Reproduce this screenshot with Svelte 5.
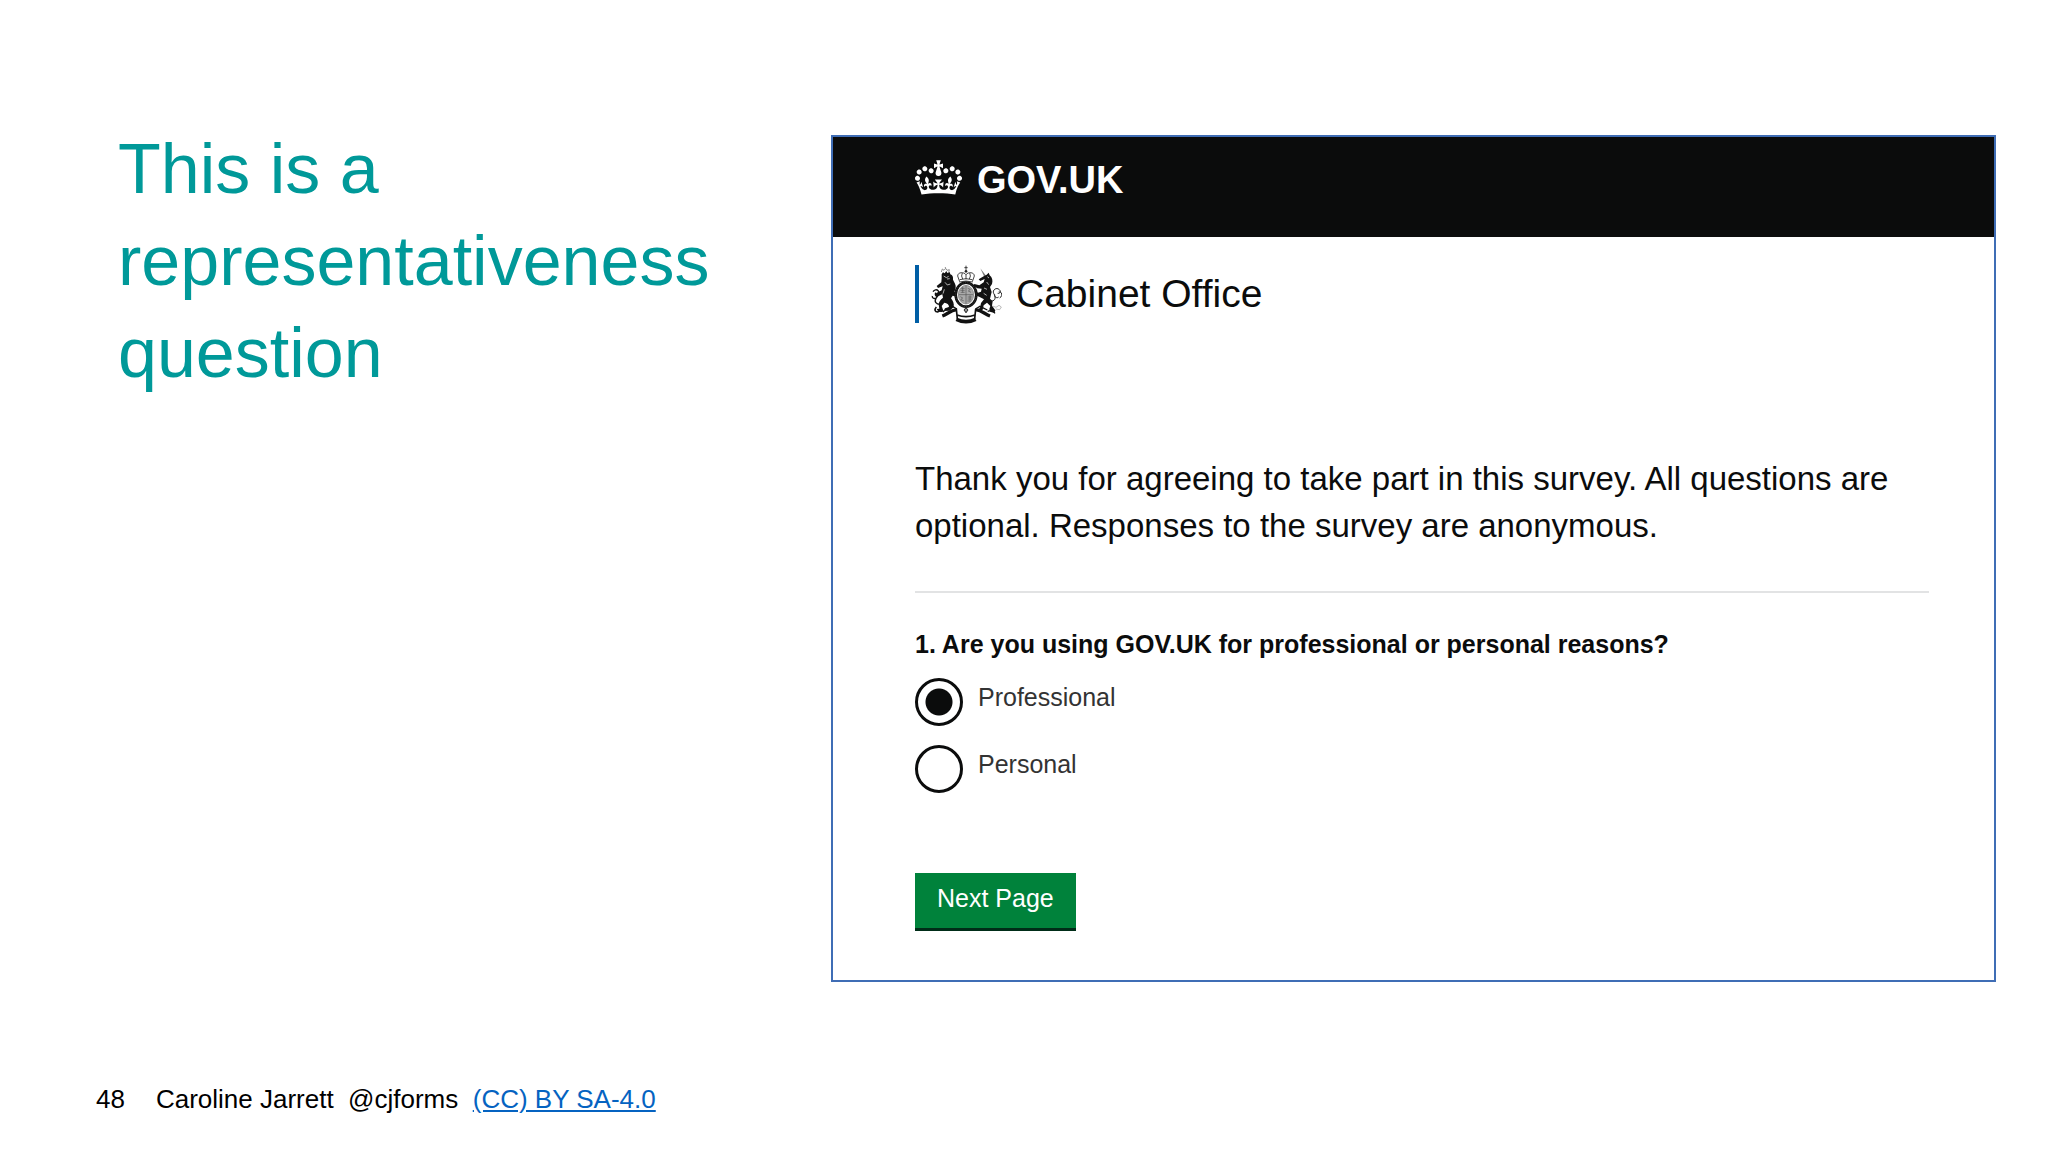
<script lang="ts">
  let reason = 'professional';

  const options = [
    { value: 'professional', label: 'Professional' },
    { value: 'personal', label: 'Personal' },
  ];
</script>

<div class="slide">
  <main>
    <h1>This is a representativeness question</h1>

    <section class="survey">
      <header>
        <svg class="crown" viewBox="0 0 132 97" aria-hidden="true">
          <path fill="currentColor" d="M25 30.2c3.5 1.5 7.7-.2 9.1-3.7 1.5-3.6-.2-7.8-3.9-9.2-3.6-1.4-7.6.3-9.1 3.9-1.4 3.5.3 7.5 3.9 9zM9 39.5c3.6 1.5 7.8-.2 9.2-3.7 1.5-3.6-.2-7.8-3.9-9.1-3.6-1.5-7.6.2-9.1 3.8-1.4 3.5.3 7.5 3.8 9zM4.4 57.2c3.5 1.5 7.7-.2 9.1-3.8 1.5-3.6-.2-7.7-3.9-9.1-3.5-1.5-7.6.3-9.1 3.8-1.4 3.5.3 7.6 3.9 9.1zm38.3-21.4c3.5 1.5 7.7-.2 9.1-3.8 1.5-3.6-.2-7.7-3.9-9.1-3.6-1.5-7.6.3-9.1 3.8-1.3 3.6.4 7.7 3.9 9.1zm64.4-5.6c-3.6 1.5-7.8-.2-9.1-3.7-1.5-3.6.2-7.8 3.8-9.2 3.6-1.4 7.7.3 9.2 3.9 1.3 3.5-.4 7.5-3.9 9zm15.9 9.3c-3.6 1.5-7.7-.2-9.1-3.7-1.5-3.6.2-7.8 3.7-9.1 3.6-1.5 7.7.2 9.2 3.8 1.5 3.5-.3 7.5-3.8 9zm4.7 17.7c-3.6 1.5-7.8-.2-9.2-3.8-1.5-3.6.2-7.7 3.9-9.1 3.6-1.5 7.7.3 9.2 3.8 1.3 3.5-.4 7.6-3.9 9.1zM89.3 35.8c-3.6 1.5-7.8-.2-9.2-3.8-1.4-3.6.2-7.7 3.9-9.1 3.6-1.5 7.7.3 9.2 3.8 1.4 3.6-.3 7.7-3.9 9.1zM69.7 17.7l8.9 4.7V9.3l-8.9 2.8c-.2-.3-.5-.6-.9-.9L72.4 0H59.6l3.5 11.2c-.3.3-.6.5-.9.9l-8.8-2.8v13.1l8.8-4.7c.3.3.6.7.9.9l-5 15.4v.1c-.2.8-.4 1.6-.4 2.4 0 4.1 3.1 7.5 7 8.1h.2c.3 0 .7.1 1 .1.4 0 .7 0 1-.1h.2c4-.6 7.1-4.1 7.1-8.1 0-.8-.1-1.7-.4-2.4V34l-5.1-15.4c.4-.2.7-.6 1-.9zM66 92.8c16.9 0 32.8 1.1 47.1 3.2 4-16.9 8.9-26.7 14-33.5l-9.6-3.4c1 4.9 1.1 7.2 0 10.2-1.5-1.4-3-4.3-4.2-8.7L108.6 76c2.8-2 5-3.2 7.5-3.3-4.4 9.4-10 11.9-13.6 11.2-4.3-.8-6.3-4.6-5.6-7.9 1-4.7 5.7-5.9 8-.5 4.3-8.7-3-11.4-7.6-8.8 7.1-7.2 7.9-13.5 2.1-21.1-8 6.1-8.1 12.3-4.5 20.8-4.7-5.4-12.1-2.5-9.5 6.2 3.4-5.2 7.9-2 7.2 3.1-.6 4.3-6.4 7.8-13.5 7.2-10.3-.9-10.9-8-11.2-13.8 2.5-.5 7.1 1.8 11 7.3L80.2 60c-4.1 4.4-8 5.3-12.3 5.4 1.4-4.4 8-11.6 8-11.6H55.5s6.4 7.2 7.9 11.6c-4.2-.1-8-1-12.3-5.4l1.4 16.4c3.9-5.5 8.5-7.7 10.9-7.3-.3 5.8-.9 12.8-11.1 13.8-7.2.6-12.9-2.9-13.5-7.2-.7-5 3.8-8.3 7.1-3.1 2.7-8.7-4.6-11.6-9.4-6.2 3.7-8.5 3.6-14.7-4.6-20.8-5.8 7.6-5 13.9 2.2 21.1-4.7-2.6-11.9.1-7.7 8.8 2.3-5.5 7.1-4.2 8.1.5.7 3.3-1.3 7.1-5.7 7.9-3.5.7-9-1.8-13.5-11.2 2.5.1 4.7 1.3 7.5 3.3l-4.7-15.4c-1.2 4.4-2.7 7.2-4.3 8.7-1.1-3-.9-5.3 0-10.2l-9.5 3.4c5 6.9 9.9 16.7 14 33.5 14.8-2.1 30.8-3.2 47.7-3.2z" />
        </svg>
        <span class="wordmark">GOV.UK</span>
      </header>

      <div class="body">
        <div class="department">
          <svg class="arms" viewBox="80 28 213 177" aria-hidden="true">
            <!-- crown -->
            <g fill="none" stroke="#222" stroke-width="2.5">
              <path d="M185 30v14M180 36h10M166 78l-6-17c0-12 19-13 25-4 6-9 25-8 25 4l-6 17M166 72q19-6 38 0M165 79q20-6 40 0M185 56v15M174 52q-5 9 1 18M196 52q5 9-1 18" />
            </g>
            <circle cx="185" cy="47" r="4" fill="#222" />
            <!-- lion -->
            <path d="M112 56l4-6 5 3 5-7 3 6 7-3 2 7c7 2 9 9 8 16l6 12c4 8 2 16-2 24l10 8-3 7-12-3-5 8c6 8 10 16 8 26l-12 11-18 1 4-8 12-4c0-8-6-12-14-13l-8 10 4 11c0 8-7 9-15 4l-4-6 8-1-2-13c1-9 7-15 13-20l-2-10-16 7-5-5 3-6 16-8 3-12-14 5-4-6 14-11 1-12z" />
            <path d="M109 146c-14 1-20-8-14-18 6-9 12-14 7-22-5-6-12-4-16 2M95 128c-8 2-12-3-11-7M98 123c-5-2-7-8-3-12" fill="none" stroke="#111" stroke-width="4" />
            <path d="M111 49l3-9 5 4 5-6 4 6 7-2-2 9M123 38v-4" fill="none" stroke="#777" stroke-width="2.5" />
            <path d="M118 61l8 5 7-4M128 70l8-1M122 80l7 8 9-3M120 101l-4 13" fill="none" stroke="#fff" stroke-width="2" />
            <!-- unicorn -->
            <path d="M228 38l17 22-5 4z" fill="#777" />
            <path d="M238 62l9-5 6-6 3 8c8 6 10 17 7 26l-6 9 5 15-5 20 8 8-2 13 10 14-3 8-13-4-2-8 3-9-10-10-10 8-3 13-12 7-6-7 10-5 3-15 9-11-13-7-12-5-10-11 4-5 13 8 9-3 2-9-13-1-12-8 3-5 15 4 13-9 3-10-13 6-5-5z" />
            <path d="M260 136c17 0 13-15 8-23-5-9 8-20 17-11 7 6 1 13-5 11M283 109c12-2 12 13 3 18M271 116c-2 8 7 13 12 8" fill="none" stroke="#222" stroke-width="3" />
            <path d="M249 63l5 4M247 79l6 8M239 97l9 4M238 113l9 6" fill="none" stroke="#fff" stroke-width="2" />
            <path d="M265 151l10 4 9-6 7 5-5 8-12-2" fill="none" stroke="#999" stroke-width="2" />
            <!-- garter and shield -->
            <ellipse cx="185" cy="117" rx="31" ry="36" fill="#fff" stroke="#111" stroke-width="8" />
            <ellipse cx="185" cy="117" rx="31" ry="36" fill="none" stroke="#888" stroke-width="1" stroke-dasharray="3 4" />
            <ellipse cx="185" cy="117" rx="23" ry="28" fill="#aaa" stroke="#777" stroke-width="2" />
            <path d="M185 90v54M163 117h44M170 98h11M168 104h13M169 110h12M190 98l8 3-6 5 8 4M168 123l7 4-6 5 9 3M190 124h12M190 130h11M189 136h7M175 94v17M197 119v19" fill="none" stroke="#555" stroke-width="2" />
            <path d="M185 153v18M179 163l6-7 6 7-6 8z" fill="#fff" stroke="#222" stroke-width="3" />
            <!-- motto ribbon -->
            <g fill="none" stroke="#111">
              <path d="M96 154c-7 8-4 15 4 15l10-6 10 5" stroke-width="5" />
              <path d="M114 181c16-6 24-17 43-19M257 181c-16-6-24-17-43-19" stroke-width="10" />
              <path d="M122 163l22-11 14 8M249 163l-22-11-14 8" stroke-width="4" />
              <path d="M156 160l3 30M214 160l-3 30M158 178q27 10 54 0" stroke-width="5" />
              <path d="M156 191q29 14 58 0" stroke-width="11" />
              <path d="M250 167l14-4 8 10" stroke-width="4" />
            </g>
          </svg>
          <span>Cabinet Office</span>
        </div>

        <p class="intro">
          Thank you for agreeing to take part in this survey. All questions are
          optional. Responses to the survey are anonymous.
        </p>

        <form on:submit|preventDefault>
          <fieldset>
            <legend>1. Are you using GOV.UK for professional or personal reasons?</legend>
            {#each options as { value, label }}
              <div class="option">
                <input type="radio" id={value} name="reason" {value} bind:group={reason} />
                <label for={value}>{label}</label>
              </div>
            {/each}
          </fieldset>
          <button type="submit">Next Page</button>
        </form>
      </div>
    </section>
  </main>

  <footer>
    <span>48</span>
    <span class="credit">Caroline Jarrett&nbsp; @cjforms&nbsp; <a href="#licence">(CC) BY SA-4.0</a></span>
  </footer>
</div>

<style>
  :global(body) {
    background: #fff;
  }
  .slide {
    box-sizing: border-box;
    min-height: 100vh;
    display: flex;
    flex-direction: column;
    justify-content: space-between;
    padding: 135px 52px 36px 96px;
    font-family: "Liberation Sans", Arial, sans-serif;
    color: #000;
  }
  main {
    display: grid;
    grid-template-columns: minmax(0, 735fr) minmax(0, 1165fr);
    align-items: start;
  }
  h1 {
    margin: -12px 0 0;
    padding: 0 60px 0 22px;
    font-size: 70px;
    line-height: 92px;
    font-weight: 400;
    color: #009999;
  }
  .survey {
    border: 2px solid #3f6db5;
    background: #fff;
    color: #0b0c0c;
  }
  header {
    display: flex;
    align-items: flex-start;
    gap: 15px;
    height: 100px;
    box-sizing: border-box;
    padding: 23px 82px 0;
    background: #0b0c0c;
    color: #fff;
  }
  .crown {
    width: 47px;
    height: 35px;
  }
  .wordmark {
    font-size: 38px;
    line-height: 40px;
    font-weight: 700;
  }
  .body {
    padding: 28px 65px 49px 82px;
  }
  .department {
    display: flex;
    align-items: center;
    gap: 14px;
    height: 58px;
    padding-left: 12px;
    border-left: 4px solid #005ea5;
    font-size: 39px;
    line-height: 48px;
  }
  .arms {
    width: 71px;
    height: 59px;
    fill: #111;
  }
  .intro {
    margin: 132px 0 0;
    padding-bottom: 42px;
    border-bottom: 2px solid #e2e3e4;
    font-size: 33px;
    line-height: 47px;
  }
  fieldset {
    margin: 0;
    padding: 36px 0 0;
    border: 0;
  }
  legend {
    float: left;
    width: 100%;
    padding: 0;
    font-size: 25px;
    line-height: 30px;
    font-weight: 700;
  }
  .option {
    clear: both;
    display: flex;
    gap: 15px;
    padding-top: 19px;
    font-size: 25px;
    color: #333;
  }
  .option label {
    line-height: 38px;
  }
  input {
    appearance: none;
    box-sizing: border-box;
    width: 48px;
    height: 48px;
    margin: 0;
    border: 3px solid #0b0c0c;
    border-radius: 50%;
    background: #fff;
  }
  input:checked {
    background: radial-gradient(circle, #0b0c0c 13px, #fff 14px);
  }
  button {
    margin-top: 80px;
    padding: 10px 22px 15px;
    border: 0;
    border-bottom: 3px solid #002d18;
    background: #00823b;
    color: #fff;
    font: 25px/30px "Liberation Sans", Arial, sans-serif;
  }
  footer {
    display: flex;
    gap: 31px;
    font-size: 26px;
    line-height: 34px;
  }
  a {
    color: #0563c1;
  }
</style>
